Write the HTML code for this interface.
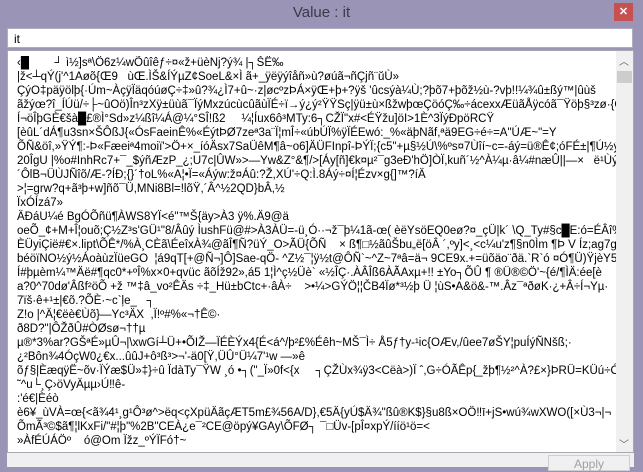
<!DOCTYPE html>
<html><head><meta charset="utf-8"><style>
body{margin:0;width:643px;height:467px;background:#9a94b6;overflow:hidden;font-family:"Liberation Sans","Noto Sans CJK SC",sans-serif;position:relative}
.title{position:absolute;top:4px;left:0;width:643px;text-align:center;font-size:15px;color:#3a3a4a}
.close{position:absolute;left:614px;top:3px;width:19px;height:18px;background:#c75050;color:#fff;font-size:11px;font-weight:bold;text-align:center;line-height:18px}
.inp{position:absolute;left:7px;top:28px;width:626px;height:20px;background:#fff;border:1px solid #b0acc0;font-size:12px;line-height:20px;box-sizing:border-box;padding-left:6px}
.ta{position:absolute;left:7px;top:50px;width:627px;height:403px;background:#fff;border:1px solid #a8a8b0;box-sizing:border-box}
.txt{position:absolute;left:9px;top:5px;width:600px;font-size:11.5px;line-height:14px;white-space:pre;overflow:hidden;color:#000}
.sb{position:absolute;right:0;top:0;width:17px;height:401px;background:#f0f0f0}
.thumb{position:absolute;left:1px;top:20px;width:15px;height:12px;background:#cdcdcd}
.arr{position:absolute;left:3px;font-size:10px;color:#606060}
.bottom{position:absolute;left:7px;top:453px;width:627px;height:14px;background:#f0f0f0}
.apply{position:absolute;left:548px;top:455px;width:80px;height:14px;border:1px solid #cfcfcf;background:#f0f0f0;font-size:12px;color:#a0a0a0;text-align:center;line-height:16px}
</style></head><body>
<div class="title">Value : it</div>
<div class="close">✕</div>
<div class="inp">it</div>
<div class="ta"><div class="txt">‹█        ┘ ì½]sª\Ö6z¼wÕûîêƒ÷¤«ž+üèNj?ý¾ |┐ŠË‰
|ž&lt;┴qÝ(j'^1Aøõ{Œ9   ùŒ.ÌŠ&amp;ÍÝµZ¢SoeL&amp;×Ì ã+_ÿëÿýîåñ»ù?øúã¬ñÇjñ¨ŭÙ»
ÇýO‡päÿölþ{·Úm~ÀçÿÏäqóúøÇ÷‡»û?¾¿Ì7+û~·z|øcºzÞÁ×ÿŒ+þ+?ÿš 'ûcsýà¼Ù;?þõ7+þõž½ù-?vþ!!¼¾û±ßý™|ûùš
ãžýœ?î_ÍÚü/÷├~ûOö)În³zXÿ±üùã¯ÏýMxzúcùcûãùÏÉ÷ï→ý¿ý²ŸŸSç|ÿü±ù×ßžwþœÇöóÇ‰÷ácexxÆüãÅÿcóã¯Ÿöþ§³zø·{Ç(ñ):↑
Í¬öÎþGÈ€šà█£®Ì°Sd»z¼ßî¼Á@¼°SÎ!ß2     ¼¦Íux6ô³MTy:6┐CŽÏ"x#&lt;ÉŸžu]öI&gt;1È^3ÏýÐpöRCŸ
[èûL´dÁ¶u3sn×ŠÔßJ{«ÓsFaeinÊ%«ÉýtÞØ7zeª3a¨Ï¦mÎ÷«úbÚÏ%ÿÏÉEwó:_%«äþNãf,ªä9EG÷é÷=A"ÚÆ~"=Y
ÕÑ&amp;öî,»ŸÝ¶:-Þ«Fæeiª4moiï'&gt;Ö+×_íóÄsx7SaÜêM¶â~o6]ÄÜFInpî-ÞÝÏ;{c5"+µ§½Ú\%ºs¤7Ùîí~c=-áý=ü®Ê¢;óFÉ±|¶Ú½ý³½Ñãl,
20ÎgU |%o#InhRc7+¯_$ýñÆzP_¿;U7c|ÛW»&gt;—Yw&amp;Z°&amp;¶/&gt;[Áy[ñ]€k¤µ²¯g3eÐ'hÖ]ÒÏ,kuñ´½^À¼µ·â¼#næÛ||—×   ë¹Ùý¤uÕt
´ÔlB¬ÜÙJÑîõ/Æ-?ÍÐ;{}´†oL%«A¦•Ï=«Áýw:ž¤Áû:?Ž,XÚ'÷Q:Ì.8Áý÷¤Í¦Ézv×g{]™?íÄ
&gt;¦=grw?q+ã³þ+w]ñõ¯Ü,MNi8Bl=!lõŸ,´Â^½2QD}bÂ,½
ÏxÓÍzá7»
ÄÐáU¼é BgÓÕñü¶ÀWS8YÏ&lt;é"™Š{äy&gt;À3 ÿ%.Ä9@ä
oeÕ_¢+M+Î¦ouõ;Ç½Z³s'GÜ¹"8/Âûý ÌushFü@#&gt;À3ÀÜ=-ü¸Ó··¬ž¯þ¼1ã-œ( èëYsöEQ0eø?¤_çÜ|k´ \Q_Ty#§c█E:ó=ÉÂî%ø
ÈÜyiÇië#€×.lipt\ÕÊ*/%À¸CÈã\ÉeîxÀ¾@ãÎ¶Ñ?üÝ_O&gt;ÃÜ{ÕÑ    × ß¶□½ãûŠbu„ë[öÂ ´,ºy]&lt;¸&lt;c¼u'z¶§n0Ìm ¶Þ V Íz;ag7g
béöïNO½ý½ÁoàùzÏüeGO  ¦á9qT[+@Ñ¬]Ô]Sae-qÖ- ^Z½¯¦ÿ½t@ÔÑ`~^Z~7ªâ=ä¬ 9CE9x.+=üõäo¨ðä.`R`ó ¤Ó¶Ü)ŸjèY5E÷ZÍ^w#oq§ö¬þ²
Í#þµèm¼™Äë#¶qc0*+ºÎ%x×0+qvüc ãõÍž92»,á5 1¦Ì^ç½Üè` «½ÎÇ·.ÀÂÎß6ÀÃAxµ+!! ±Yo┐ÕÛ ¶ ®Ü®©Ö'~{é/¶ÌÄ:ée[è
a?0^70dø'Âßf²öÕ +ž ™‡â_vo²ÊÄs ÷‡_Hü±bCtc+·âÀ÷    &gt;•¼&gt;GÝÖ¦¦ČB4Ïø*³½þ Ü ¦ùS•A&amp;ö&amp;-™.Âz¯ªðøK·¿+Â÷Í¬Yµ·
7ïš·ê+¹±|€õ.?ÕÈ·~c`ļe_   ┐
Z!o |^Ä¦€ëè€Ùõ}—Yc³ÄX  ,Ï!º#%«¬†Ê©·
ð8D?"|ÔŽðÛ#ÒØsø¬††µ
µ®*3%ar?GŠªÉ»µÛ¬|\xwGí┴Ü+•ÕIŽ—ÏÉÈÝx4{É&lt;á^/þ²£%Éêh~MŠ¯Ì÷ Å5ƒ†y-¹ic{OÆv,/ûee7øŠY¦puÍýÑNšß;·
¿²Bôn¾4ÓçW0¿€x...ûûJ+ô³ß³&gt;¬'-ä0[Ÿ,ÜÛ°Ü¼7'¹w —»ê
õƒ§|ÈæqÿË~õv·ÏÝæ$Ü»‡}÷û ÏdàTy¯ŸW ¸ó •┐("_Ï»0f&lt;{x     ┐ÇŽÙx¾ÿ3&lt;Cëà&gt;)Ï ˆ,G÷ÓÃÊp{_žþ¶½²^À?£×}ÞRÜ=KÜú÷ÓÍp
˜^u└¸Ç›öVyÄµµ›Ú‼ê-
:'é€|Èéò
è6¥_ùVÀ=œ{&lt;ã¾4¹¸g¹Ô³ø^&gt;ëq&lt;çXpüÄãçÆT5m£¾56A/D},€5Ä{yÚ$Ä¾"ßû®K$}§u8ß×OÖ‼ī+jS•wú¾wXWO([×Ù3¬|¬
ÕmÃ³©$ã¶¦lKxFi/"#¦þ"%2B"CEÀ¿e¯²CE@öpý¥GAy\ÕFØ┐ ¯□Üv-[pÎ¤xpÝ/ííö¹ö=&lt;
»ÀfÉÚÁÖº    ó@Om Ïžz_ºÝÏFó†~</div>
<div class="sb"><div class="arr" style="top:2px">︿</div><div class="thumb"></div><div class="arr" style="top:385px">﹀</div></div></div>
<div class="bottom"></div>
<div class="apply">Apply</div>
</body></html>
